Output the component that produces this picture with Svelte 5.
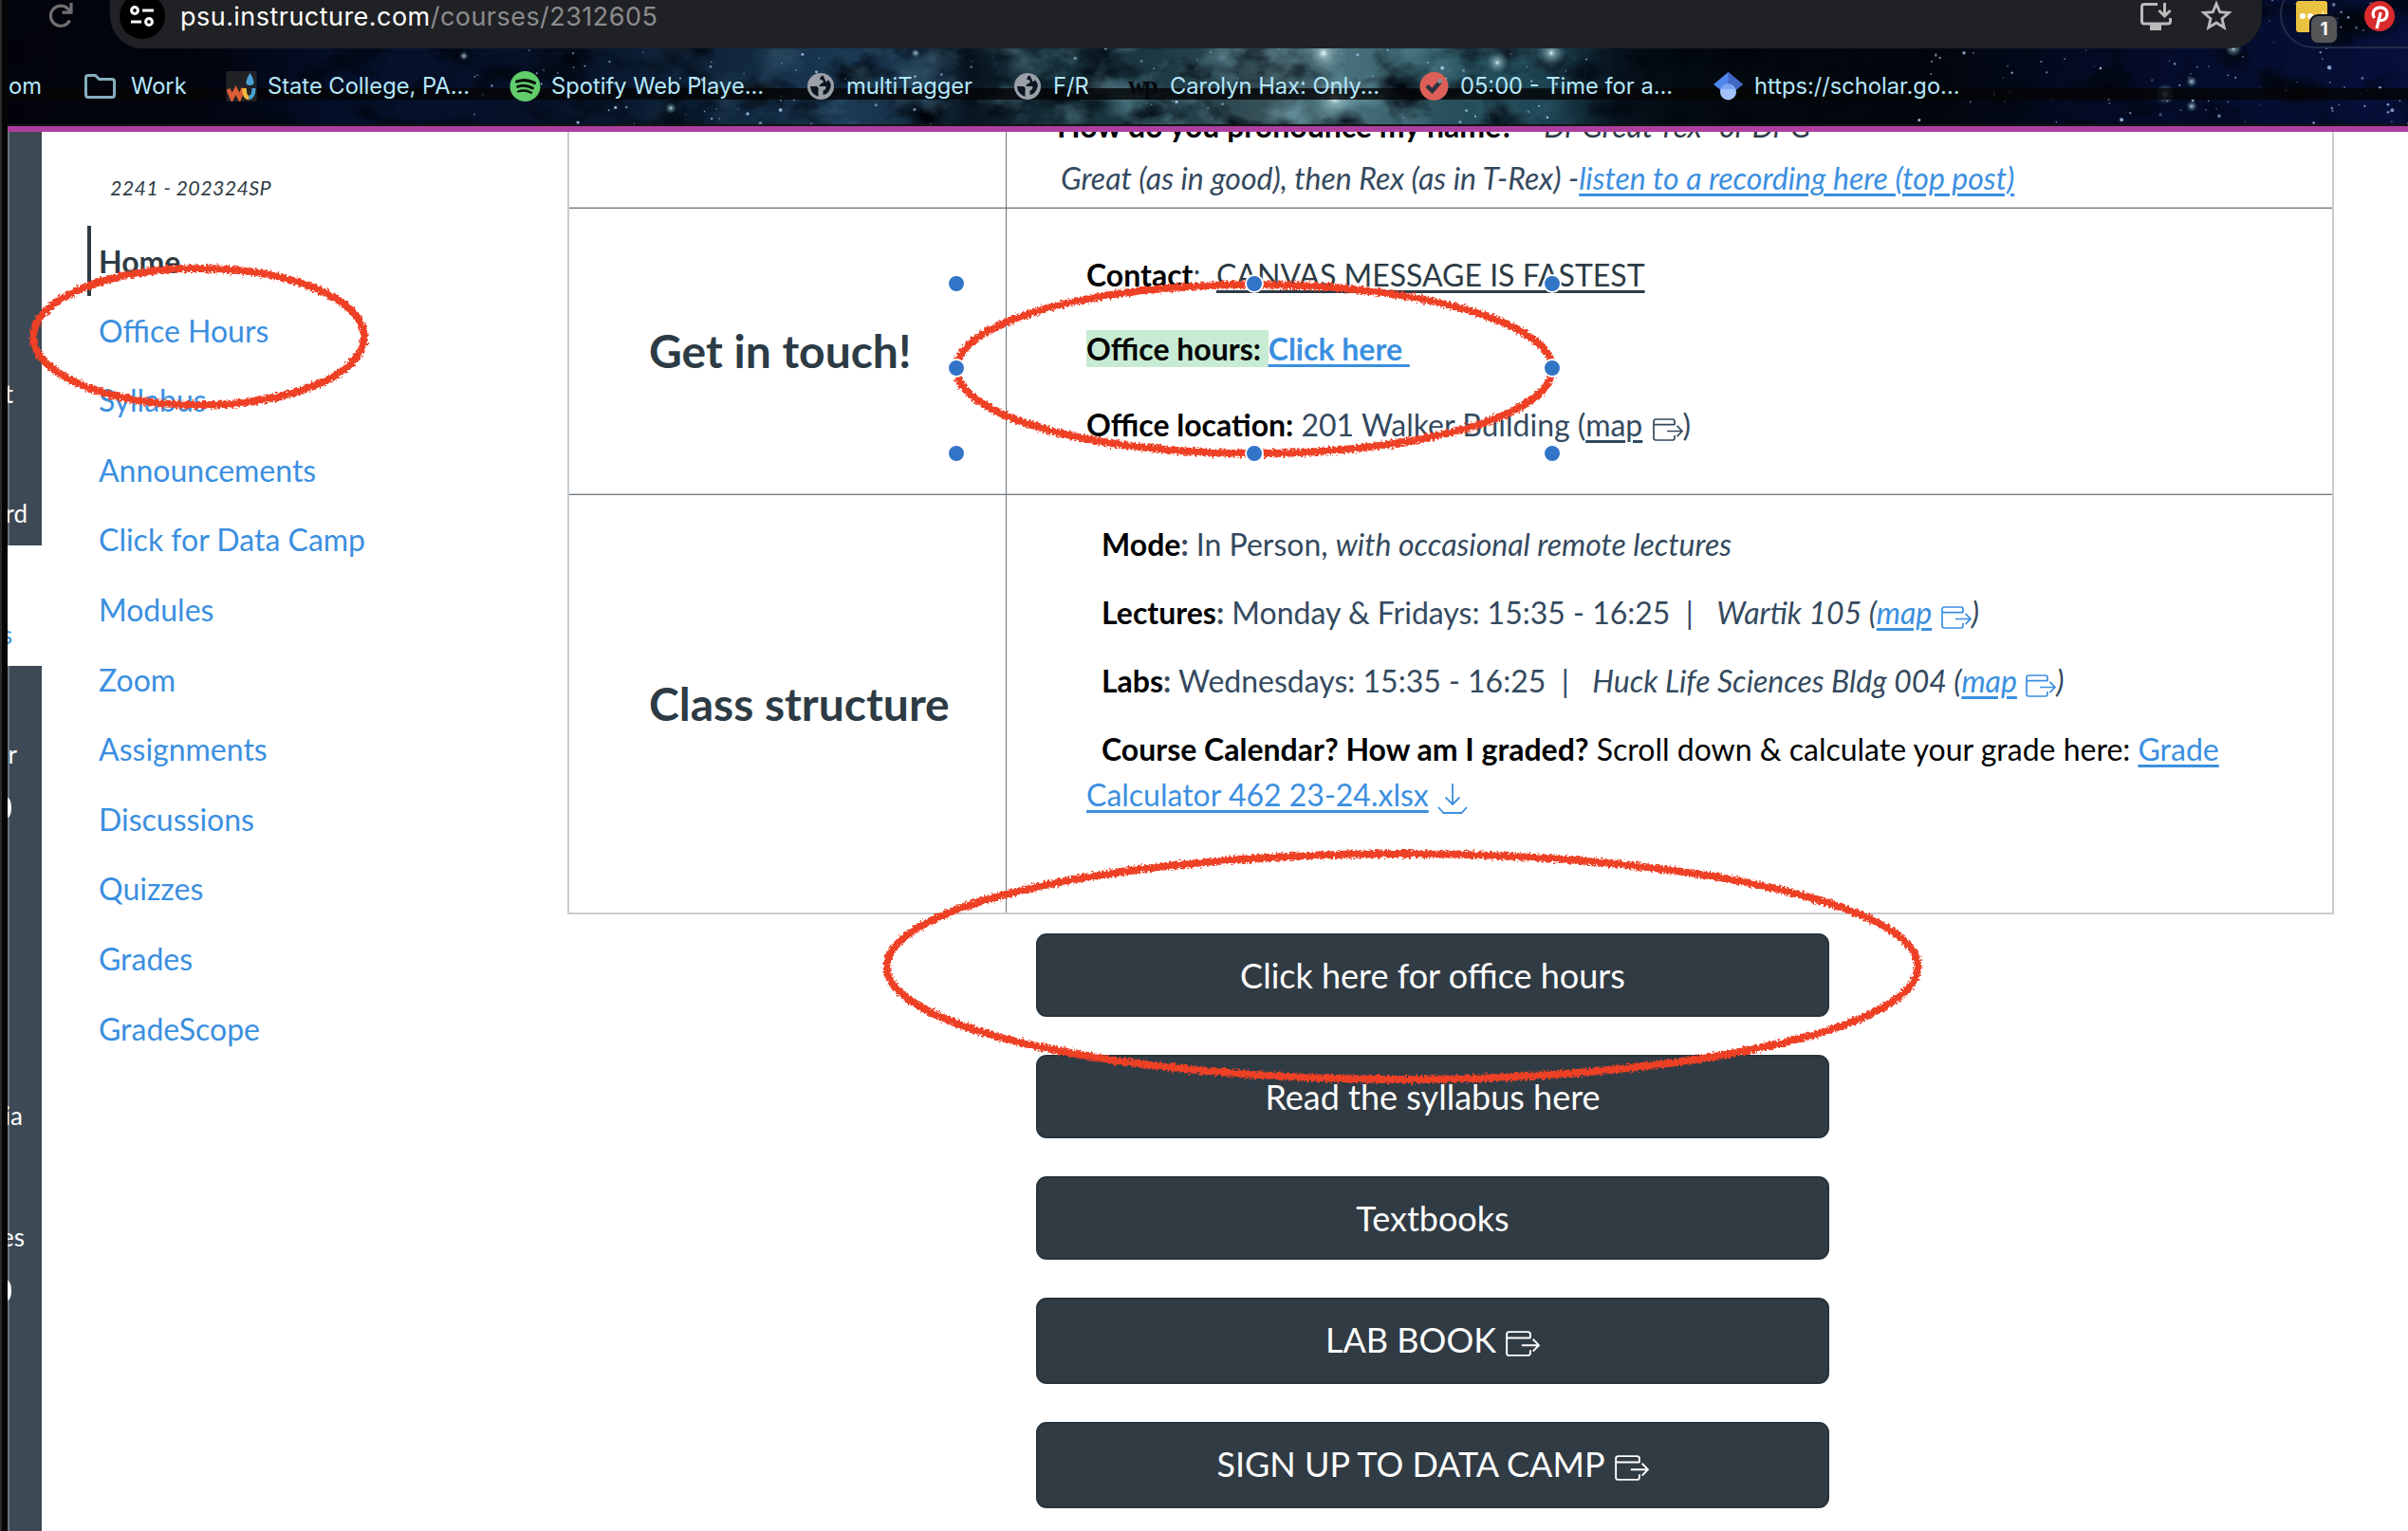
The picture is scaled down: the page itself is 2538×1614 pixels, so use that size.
<script>
  const navItems = ['Home', 'Office Hours', 'Syllabus', 'Announcements', 'Click for Data Camp', 'Modules', 'Zoom', 'Assignments', 'Discussions', 'Quizzes', 'Grades', 'GradeScope'];

  const bookmarks = [
    { icon: 'folder', label: 'Work', w: 149 },
    { icon: 'wu', label: 'State College, PA...', w: 299 },
    { icon: 'spotify', label: 'Spotify Web Playe...', w: 313 },
    { icon: 'globe', label: 'multiTagger', w: 218 },
    { icon: 'globe', label: 'F/R', w: 121 },
    { icon: 'wp', label: 'Carolyn Hax: Only...', w: 306 },
    { icon: 'check', label: '05:00 - Time for a...', w: 310 },
    { icon: 'scholar', label: 'https://scholar.go...', w: 300 }
  ];

  const buttons = [
    { label: 'Click here for office hours', ext: false },
    { label: 'Read the syllabus here', ext: false },
    { label: 'Textbooks', ext: false },
    { label: 'LAB BOOK', ext: true },
    { label: 'SIGN UP TO DATA CAMP', ext: true }
  ];

  // Small deterministic generator so the star field is stable between loads.
  let seed = 7;
  const rnd = () => {
    seed = (seed * 16807) % 2147483647;
    return seed / 2147483647;
  };
  const clusters = [[500, 850, 75], [850, 1300, 35], [1200, 1680, 60], [2020, 2538, 130]];
  const stars = clusters.flatMap(([a, b, n]) =>
    Array.from({ length: n }, () => ({ x: a + rnd() * (b - a), y: rnd() * 131, r: 0.7 + rnd() * rnd() * 1.6, o: 0.3 + rnd() * 0.6 }))
  );
  const glows = [[1407, 104, 30], [1395, 56, 26], [1635, 56, 16], [1578, 66, 12], [2282, 99, 11], [2354, 51, 9], [707, 114, 6], [489, 59, 5], [2310, 86, 6], [2310, 112, 6], [965, 56, 5]];
</script>

{#snippet ext()}
  <svg class="ext" viewBox="0 0 32 24" fill="none" stroke="currentColor" stroke-width="1.7">
    <path d="M23 7V3.2Q23 1 20.8 1H3.2Q1 1 1 3.2V20.8Q1 23 3.2 23H20.8Q23 23 23 20.8V18M1 6.6H23M15 13.5H30.5M25.5 7.8L31 13.5L25.5 19.2" />
  </svg>
{/snippet}

<div class="screen">
  <div class="edge"></div>
  <div class="window">
    <header>
      <svg class="sky" viewBox="8 0 2530 131" preserveAspectRatio="none">
        <defs>
          <linearGradient id="sky">
            <stop offset="0" stop-color="#02030a" />
            <stop offset=".08" stop-color="#02040f" />
            <stop offset=".15" stop-color="#05112e" />
            <stop offset=".22" stop-color="#061026" />
            <stop offset=".29" stop-color="#0d2239" />
            <stop offset=".35" stop-color="#1b3a54" />
            <stop offset=".385" stop-color="#142c42" />
            <stop offset=".4" stop-color="#081622" />
            <stop offset=".44" stop-color="#16303a" />
            <stop offset=".48" stop-color="#1d3a44" />
            <stop offset=".53" stop-color="#3a535b" />
            <stop offset=".56" stop-color="#48707a" />
            <stop offset=".6" stop-color="#27505c" />
            <stop offset=".64" stop-color="#1d4554" />
            <stop offset=".67" stop-color="#07131e" />
            <stop offset=".7" stop-color="#030a10" />
            <stop offset=".8" stop-color="#02060c" />
            <stop offset=".87" stop-color="#040b26" />
            <stop offset="1" stop-color="#06103a" />
          </linearGradient>
          <linearGradient id="tealFade">
            <stop offset="0" stop-color="#fff" stop-opacity="0" />
            <stop offset=".2" stop-color="#fff" stop-opacity=".25" />
            <stop offset=".7" stop-color="#fff" stop-opacity=".7" />
            <stop offset="1" stop-color="#fff" stop-opacity="0" />
          </linearGradient>
          <mask id="teal"><rect x="650" width="1040" height="131" fill="url(#tealFade)" /></mask>
          <radialGradient id="glow">
            <stop offset="0" stop-color="#e6f6f8" />
            <stop offset=".2" stop-color="#a9cdd4" stop-opacity=".65" />
            <stop offset="1" stop-color="#4f8090" stop-opacity="0" />
          </radialGradient>
          <filter id="dust" x="0" y="0" width="100%" height="100%" color-interpolation-filters="sRGB">
            <feTurbulence type="fractalNoise" baseFrequency=".016 .024" numOctaves="5" seed="4" />
            <feColorMatrix values="0 0 0 0 0  0 0 0 0 .02  0 0 0 0 .05  3 0 0 0 -1.4" />
          </filter>
          <filter id="cloud" x="0" y="0" width="100%" height="100%" color-interpolation-filters="sRGB">
            <feTurbulence type="fractalNoise" baseFrequency=".018 .026" numOctaves="5" seed="12" />
            <feColorMatrix values="0 0 0 0 .45  0 0 0 0 .65  0 0 0 0 .7  0 3 0 0 -1.4" />
          </filter>
        </defs>
        <rect x="8" width="2530" height="131" fill="url(#sky)" />
        <rect x="8" width="2530" height="131" filter="url(#dust)" />
        <g mask="url(#teal)"><rect x="650" width="1040" height="131" filter="url(#cloud)" /></g>
        {#each glows as [x, y, r]}
          <circle cx={x} cy={y} {r} fill="url(#glow)" />
        {/each}
        {#each stars as s}
          <circle cx={s.x} cy={s.y} r={s.r} fill="#a9c8ec" opacity={s.o} />
        {/each}
        <rect x="8" y="93" width="2530" height="12" fill="#050506" opacity=".82" />
      </svg>

      <div class="toolbar">
        <svg class="reload" viewBox="0 0 26 27" fill="none" stroke="#6f6f70" stroke-width="3.2">
          <path d="M22.5 18.5A10.6 10.6 0 1 1 21.4 7.2L23.5 9.5M24 0V10.2H14.5" />
        </svg>
        <div class="address">
          <div class="site">
            <svg viewBox="0 0 26 22" fill="none" stroke="#fff" stroke-width="3">
              <circle cx="5" cy="5" r="3.4" /><path d="M13 5H25M1 17H12" /><circle cx="20" cy="17" r="3.4" />
            </svg>
          </div>
          <span class="url">psu.instructure.com<i>/courses/2312605</i></span>
          <svg class="install" viewBox="0 0 33 29" fill="none" stroke="#b9babb" stroke-width="3">
            <path d="M18 1.5H4Q1.500 1.500 1.500 4V19.500Q1.500 22 4 22H29Q31.500 22 31.500 19.500V16" />
            <path d="M25.500 0V13M19.500 8L25.500 14L31.500 8" />
            <path d="M10 22H22V29H10Z" fill="#b9babb" stroke="none" />
          </svg>
          <svg class="star" viewBox="0 0 34 32" fill="none" stroke="#b9babb" stroke-width="2.900">
            <path d="M17 4L20.700 12.700L30.200 13.500L23 19.700L25.200 29L17 24L8.800 29L11 19.700L3.800 13.500L13.300 12.700Z" />
          </svg>
        </div>
        <div class="extensions">
          <div class="pass">
            <svg viewBox="0 0 33 33"><rect width="33" height="33" rx="3" fill="#eac242" /><circle cx="7" cy="16" r="3" fill="#fff" /><circle cx="15" cy="16" r="3" fill="#fff" /><path d="M28.500 11V17" stroke="#fff" stroke-width="1" /></svg>
            <b>1</b>
          </div>
          <svg class="pin" viewBox="0 0 32 32">
            <circle cx="16" cy="16" r="16" fill="#d92b2b" />
            <path d="M10.500 18C7 12 11 6.800 17 6.800C27 6.800 25 20.500 18.500 20.500Q15.700 20.500 15 18.500M17.300 12L13 29" fill="none" stroke="#fff" stroke-width="3.200" />
          </svg>
        </div>
      </div>

      <div class="bookmarks">
        <span class="cut">om</span>
        {#each bookmarks as b}
          <div class="bookmark {b.icon}" style:width="{b.w}px">
            <div class="bicon">
              {#if b.icon === 'folder'}
                <svg viewBox="0 0 33 32" fill="none" stroke="#86aec0" stroke-width="3"><path d="M1.500 7Q1.500 4.500 4 4.500H11.500L15.500 8.500H29Q31.500 8.500 31.500 11V25Q31.500 27.500 29 27.500H4Q1.500 27.500 1.500 25Z" /></svg>
              {:else if b.icon === 'wu'}
                <svg viewBox="0 0 32 32" fill="none"><rect width="32" height="32" fill="#202226" /><path d="M2 19L6 28L10 20L14 28L18 18" stroke="#dc5c35" stroke-width="4.500" /><path d="M19 18Q19 28 24 28" stroke="#f1b73e" stroke-width="4.500" /><path d="M24 28Q29 27 29 18" stroke="#4aa3d8" stroke-width="4" /><path d="M25 2Q33 15 25 15Q17 15 25 2" fill="#4aa3d8" /></svg>
              {:else if b.icon === 'spotify'}
                <svg viewBox="0 0 32 32" fill="none" stroke="#07120c" stroke-linecap="round"><circle cx="16" cy="16" r="16" fill="#62cd6b" stroke="none" /><path d="M7 11Q17 7.500 26 12.500" stroke-width="3.200" /><path d="M8 16.300Q16.500 13.500 24 18" stroke-width="2.800" /><path d="M8.500 21.500Q16 19 22.500 22.800" stroke-width="2.300" /></svg>
              {:else if b.icon === 'globe'}
                <svg viewBox="0 0 32 32"><circle cx="14.500" cy="16" r="14" fill="#9b9fa8" /><path d="M17 4.500Q13 6 14 9Q18 9 17 12Q14 13 12.500 16H20Q20 20 17 20.500V25Q23 24 25 17Q26 12 22 9Q21 13 19.500 10ZM3.500 16H10Q13 17 12 20V27Q4 24 3.500 16Z" fill="#0b1622" /></svg>
              {:else if b.icon === 'wp'}
                <span class="post">wp</span>
              {:else if b.icon === 'check'}
                <svg viewBox="0 0 32 32" fill="none"><circle cx="16" cy="16" r="15" fill="#dd6058" /><path d="M8.500 15.500L14 21L22.500 11" stroke="#2a3440" stroke-width="4.500" /><circle cx="22" cy="10.500" r="2.500" fill="#8b8b92" /></svg>
              {:else}
                <svg viewBox="0 0 32 32"><path d="M16 1L31.500 14L16 26L.5 14Z" fill="#4f86ec" /><path d="M16 1L31.500 14L16 26Z" fill="#4169c4" /><circle cx="16" cy="22" r="8.500" fill="#a1c1fa" /><path d="M8 19Q16 8 24 19Z" fill="#7aa5f4" /></svg>
              {/if}
            </div>
            <span class="label">{b.label}</span>
          </div>
        {/each}
      </div>
    </header>

    <div class="page">
      <div class="rail">
        <div class="r1"><span class="e30">t</span><span class="e15">rd</span></div>
        <div class="r2"><span class="e32">s</span></div>
        <div class="r3"><span class="e27">r</span><em></em><span class="e20">ia</span><span class="e19">es</span><em></em></div>
      </div>

      <nav>
        <p>2241 - 202324SP</p>
        {#each navItems as item, i}
          <a class:active={i === 0} href="#top">{item}</a>
        {/each}
      </nav>

      <main>
        <div class="table">
          <div class="cell head"></div>
          <div class="cell intro">
            <p><b>How do you pronounce my name?</b><i class="say">"Dr Great-rex" or Dr G</i></p>
            <p class="second"><i>Great (as in good), then Rex (as in T-Rex) -<a href="#rec">listen to a recording here (top post)</a></i></p>
          </div>
          <div class="cell head">Get in touch!</div>
          <div class="cell touch">
            <p><b>Contact</b>:&nbsp; <u>CANVAS MESSAGE IS FASTEST</u></p>
            <p><b><mark>Office hours:&nbsp;</mark><a href="#oh">Click here&nbsp;</a></b></p>
            <p><b>Office location:</b> 201 Walker Building (<u class="slate">map</u>&nbsp;{@render ext()})</p>
          </div>
          <div class="cell head">Class structure</div>
          <div class="cell class">
            <p><b>Mode</b><strong>:</strong> In Person, <i>with occasional remote lectures</i></p>
            <p><b>Lectures</b><strong>:</strong> Monday &amp; Fridays: 15:35 - 16:25 &nbsp;|&nbsp;&nbsp; <i>Wartik 105 (<a href="#m1">map</a>&nbsp;<span class="blue">{@render ext()}</span>)</i></p>
            <p><b>Labs</b><strong>:</strong> Wednesdays: 15:35 - 16:25 &nbsp;|&nbsp;&nbsp; <i>Huck Life Sciences Bldg 004 (<a href="#m2">map</a>&nbsp;<span class="blue">{@render ext()}</span>)</i></p>
            <p class="black"><b>Course Calendar? How am I graded?</b> Scroll down &amp; calculate your grade here: <a href="#g">Grade<br />Calculator 462 23-24.xlsx</a>
              <svg class="down" viewBox="0 0 32 32" fill="none" stroke="#3b8fe0" stroke-width="1.800"><path d="M16 0V22M8.500 14.500L16 22L23.500 14.500M1 25L6.500 31H25.500L31 25" /></svg></p>
          </div>
        </div>

        <div class="buttons">
          {#each buttons as b}
            <button class:tall={b.ext}>{b.label}{#if b.ext}{@render ext()}{/if}</button>
          {/each}
        </div>
      </main>
    </div>
  </div>

  <svg class="marks" viewBox="0 0 2538 1614" fill="none">
    <defs>
      <filter id="crayon" filterUnits="userSpaceOnUse" x="0" y="240" width="2538" height="940" color-interpolation-filters="sRGB">
        <feTurbulence type="fractalNoise" baseFrequency=".4" numOctaves="2" seed="9" result="n" />
        <feDisplacementMap in="SourceGraphic" in2="n" scale="7" xChannelSelector="R" yChannelSelector="G" />
      </filter>
    </defs>
    <g filter="url(#crayon)" stroke="#ee4025" stroke-width="7.800">
      <ellipse cx="209.500" cy="355" rx="174.500" ry="72" />
      <ellipse cx="1322" cy="389" rx="314" ry="89" />
      <ellipse cx="1478" cy="1019" rx="543.500" ry="119" />
    </g>
    <g fill="#3274c6" stroke="#fff" stroke-width="2">
      {#each [299, 388, 478] as y}
        {#each [1008, 1322, 1636] as x}
          {#if !(x === 1322 && y === 388)}<circle cx={x} cy={y} r="9" />{/if}
        {/each}
      {/each}
    </g>
  </svg>
</div>

<style>
  :global(body) { background: #fff; }
  .screen { position: relative; display: flex; width: 2538px; height: 1614px; overflow: hidden; font-family: Lato, Carlito, sans-serif; color: #2d3b45; background: #fff; }
  .edge { flex: none; width: 8px; background: linear-gradient(90deg, #2b2b2b 2px, #050505 2px); }
  .window { flex: 1; min-width: 0; display: flex; flex-direction: column; }
  p { margin: 0; }
  a { color: #3b8fe0; }

  header { position: relative; flex: none; height: 139px; box-sizing: border-box; border-bottom: 6px solid #ae3f9f; background: #141518; overflow: hidden; font-family: Inter, sans-serif; }
  .sky { position: absolute; inset: 0 0 auto 0; width: 100%; height: 131px; }
  .toolbar { position: relative; display: flex; height: 51px; }
  .reload { width: 26px; height: 27px; margin: 3px 39px 0 43px; flex: none; }
  .address { width: 2268px; height: 51px; flex: none; display: flex; background: #202124; border-radius: 0 0 34px 34px; box-sizing: border-box; padding-left: 10px; }
  .site { width: 48px; height: 48px; margin-top: -7px; border-radius: 50%; background: #000; display: grid; place-items: center; }
  .site svg { width: 26px; height: 22px; }
  .url { margin-left: 16px; font-size: 27px; line-height: 36px; color: #fff; white-space: nowrap; flex: 1; letter-spacing: .46px; }
  .url i { font-style: normal; color: #8b8c8e; }
  .install { width: 33px; height: 29px; margin: 3px 30px 0 0; }
  .star { width: 34px; height: 32px; margin: 0 31px 0 0; }
  .extensions { width: 200px; flex: none; height: 71px; margin: -20px 0 0 19px; box-sizing: border-box; border: 2px solid #222b47; border-radius: 36px 0 0 36px; display: flex; padding: 19px 0 0 15px; gap: 39px; }
  .pass { position: relative; width: 33px; height: 33px; flex: none; }
  .pass svg { width: 33px; height: 33px; }
  .pass b { position: absolute; left: 16px; top: 16px; width: 27px; height: 28px; border-radius: 7px; background: #555657; box-shadow: 0 0 0 2px #0b1022; color: #fff; font-size: 19px; line-height: 28px; text-align: center; }
  .pin { width: 32px; height: 32px; }

  .bookmarks { position: relative; display: flex; height: 80px; align-items: center; color: #b5e7fb; font-size: 23.700px; white-space: nowrap; }
  .cut { width: 81px; padding-left: 1px; box-sizing: border-box; flex: none; }
  .bookmark { display: flex; align-items: center; flex: none; gap: 11px; }
  .folder { gap: 16px; }
  .label, .cut { margin-top: -2px; }
  .bicon { width: 33px; height: 32px; flex: none; }
  .bicon svg { display: block; width: 33px; height: 32px; }
  .globe { gap: 9px; }
  .post { color: #06090b; font: 700 27px/30px 'Liberation Serif', serif; letter-spacing: -3px; }

  .page { flex: 1; display: flex; min-height: 0; }
  .rail { width: 36px; flex: none; display: flex; flex-direction: column; color: #fff; font-size: 26px; line-height: 32px; overflow: hidden; }
  .rail span { display: flex; justify-content: flex-end; }
  .rail .e15 { padding-right: 15px; }
  .rail .e19 { padding-right: 18px; }
  .rail .e20 { padding-right: 20px; }
  .rail .e27 { padding-right: 26px; }
  .rail .e30 { padding-right: 30px; }
  .rail .e32 { padding-right: 31px; }
  .r1, .r3 { background: linear-gradient(90deg, #68747e 2px, #3d4a56 2px); display: flex; flex-direction: column; }
  .r1 { height: 436px; }
  .r1 span:first-child { margin-top: 260px; }
  .r1 span:last-child { margin-top: 94px; }
  .r2 { height: 127px; color: #3b8fe0; background: #fff; }
  .r2 span { padding-top: 78px; }
  .r3 { flex: 1; padding-top: 77px; }
  .r3 em { width: 4px; height: 21px; background: #fff; border-radius: 0 100% 100% 0 / 0 50% 50% 0; margin: 30px 0 0; }
  .r3 em + span { margin-top: 298px; }
  .r3 span + span { margin-top: 96px; }

  nav { width: 554px; flex: none; padding: 43px 0 0 48px; box-sizing: border-box; }
  nav p { height: 56px; padding-left: 24px; font-size: 21.500px; line-height: 33px; font-style: italic; letter-spacing: .3px; }
  nav a { display: block; height: 73.600px; box-sizing: border-box; padding-left: 12px; line-height: 74px; font-size: 32px; text-decoration: none; }
  nav a.active { border-left: 4px solid #2d3b45; padding-left: 8px; font-weight: 700; color: #2d3b45; line-height: 75px; }

  main { width: 1863px; flex: none; display: flex; flex-direction: column; }
  .table { display: grid; grid-template-columns: 461px 1fr; grid-template-rows: 81px 302px 440px; border: 2px solid #c7cdd1; border-top: 0; box-sizing: border-box; height: 825px; width: 1862px; font-size: 32px; line-height: 48px; white-space: nowrap; color: #34495e; }
  .cell { min-width: 0; box-sizing: border-box; border-bottom: 1px solid #747b82; box-shadow: inset 0 -1px #c7cdd1; overflow: hidden; }
  .cell:nth-last-child(-n + 2) { border-bottom: 0; box-shadow: none; }
  .head { border-right: 1px solid #70767c; display: flex; align-items: center; padding: 0 0 1px 84px; font-size: 48px; font-weight: 700; color: #2d3b45; }
  b { color: #000; }
  strong { font-weight: 700; }
  .intro { padding: 0 0 0 53px; }
  .intro p { margin-top: -30px; height: 48px; }
  .intro .second { margin: 7px 0 0 4px; }
  .say { margin-left: 20px; color: #2d3b45; }
  .touch { padding: 46px 0 0 84px; }
  .touch p { margin-bottom: 32px; }
  .touch p:first-child { margin-bottom: 30px; }
  .touch u { color: #2d3b45; }
  .touch .slate { color: inherit; }
  mark { background: #c8ebd3; color: inherit; }
  .class { padding: 28px 0 0 84px; }
  .class p { margin-bottom: 24px; text-indent: 16px; }
  .class .black { color: #000; }
  a, u { text-decoration-thickness: 3px; text-underline-offset: 4px; }
  .blue { color: #3b8fe0; }
  .ext { width: 32px; height: 24px; vertical-align: -5px; overflow: visible; }
  .table .ext { margin-left: 2px; }
  .down { width: 32px; height: 32px; vertical-align: -8px; margin-left: 1px; }

  .buttons { width: 836px; margin: 20px 0 0 494px; display: flex; flex-direction: column; gap: 40px; }
  button { height: 88px; flex: none; border: 2px solid #28333b; border-radius: 11px; background: #313b44; color: #fff; font: 36px/48px Lato, sans-serif; padding: 0; display: flex; align-items: center; justify-content: center; gap: 10px; }
  button.tall { height: 91px; padding: 0 0 3px; }
  button .ext { width: 36px; height: 27px; margin-top: 9px; }

  .marks { position: absolute; inset: 0; width: 2538px; height: 1614px; pointer-events: none; }
</style>
